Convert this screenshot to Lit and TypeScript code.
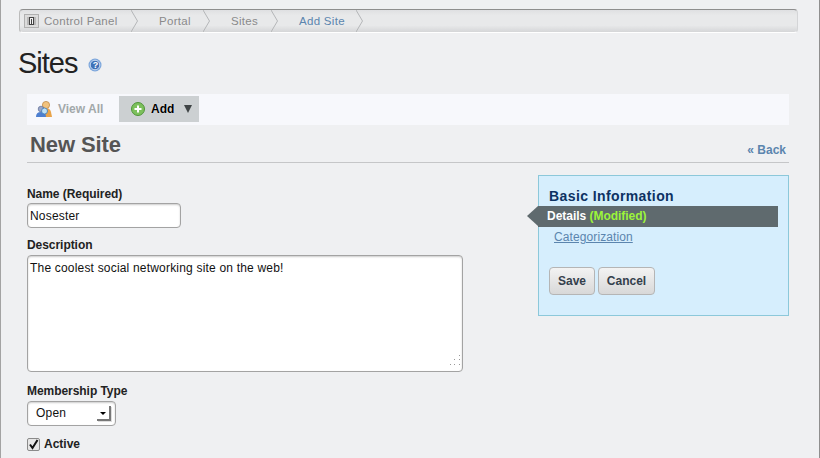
import { LitElement, html, css } from "lit";
import { customElement } from "lit/decorators.js";

@customElement("app-root")
export class AppRoot extends LitElement {
  static styles = css`
    :host { display: block; width: 820px; height: 458px; overflow: hidden; box-sizing: border-box; background: #eff0f2;
      border-left: 1px solid #a3a3a3; border-right: 1px solid #8f8f8f; font-family: "Liberation Sans", Arial, sans-serif; font-size: 12px; color: #222; padding: 9px 21px 0 17px; }
    .crumbs { height: 24px; box-sizing: border-box; display: flex; align-items: center; border: 1px solid #d4d5d7; border-top: 1px solid #8e8e8e; border-bottom: 1px solid #fff; border-left-color: #bbb; border-radius: 4px; background: linear-gradient(#dfe0e2, #e8e9ea 25%, #e8e9ea 70%, #d5d6d8); width: 779px; margin-left: 1px; }
    .crumb { position: relative; height: 22px; display: flex; align-items: center; color: #8a8a8a; letter-spacing: 0.3px; font-size: 11.5px; }
    .crumb svg.sep { position: absolute; right: 0; top: 0; }
    .c1 { width: 119px; padding-left: 4px; box-sizing: border-box; gap: 5px; }
    .c2 { width: 72px; padding-left: 20px; box-sizing: border-box; }
    .c3 { width: 68px; padding-left: 20px; box-sizing: border-box; }
    .c4 { width: 85px; padding-left: 20px; box-sizing: border-box; color: #5b85ae; }
    .title { display: flex; align-items: center; gap: 11px; height: 35px; margin-top: 13px; font-size: 29px; line-height: 35px; color: #222; letter-spacing: -1px; }
    .title svg { margin-top: 3px; }
    .toolbar { margin: 13px 0 0 9px; width: 762px; height: 31px; background: #f7f8fc; display: flex; align-items: flex-start; }
    .view { display: flex; align-items: center; height: 26px; margin-top: 2px; width: 92px; box-sizing: border-box; padding-left: 8px; gap: 5px; font-weight: bold; color: #a2a8aa; }
    .add { width: 80px; height: 26px; margin-top: 2px; background: #ccd0d2; display: flex; align-items: center; box-sizing: border-box; padding-left: 12px; font-weight: bold; color: #000; }
    .add span { margin-left: 6px; text-shadow: 0 0 1px #fff; }
    .add i { width: 0; height: 0; border-left: 4.5px solid transparent; border-right: 4.5px solid transparent; border-top: 8px solid #3f4446; margin-left: 10px; }
    .head { margin-left: 9px; width: 762px; height: 38px; box-sizing: border-box; border-bottom: 1px solid #c5c6c8; display: flex; justify-content: space-between; padding-left: 3px; }
    .head h2 { margin: 0; font-size: 22px; line-height: 40px; font-weight: bold; color: #555; letter-spacing: -0.1px; }
    .head a { font-weight: bold; color: #5b85ae; font-size: 12px; padding: 18px 3px 0 0; }
    .body { display: flex; margin-left: 9px; width: 762px; justify-content: space-between; }
    .form { padding-top: 24px; }
    label { display: block; font-weight: bold; color: #222; line-height: 14px; letter-spacing: -0.05px; }
    .box { background: #fff; border: 1px solid #a3a3a3; border-radius: 4px; box-shadow: inset 0 1px 2px #ccc; box-sizing: border-box; letter-spacing: 0.19px; color: #111; }
    .name { width: 154px; height: 25px; margin: 2px 0 10px; padding: 5px 2px; line-height: 14px; }
    .desc { position: relative; width: 436px; height: 117px; margin: 3px 0 12px; padding: 5px 2px; line-height: 14px; }
    .grip { position: absolute; right: 2px; bottom: 5px; }
    .sel { width: 89px; height: 25px; margin: 3px 0 11px; display: flex; align-items: center; padding: 0 0 2px 8px; position: relative; }
    .arrow { position: absolute; right: 4px; top: 4px; width: 14px; height: 15px; border-right: 2px solid #777; border-bottom: 2px solid #777; box-sizing: border-box; background: #fff; box-shadow: 1px 1px 0 #ddd; }
    .arrow::after { content: ""; position: absolute; left: 3px; top: 6px; border-left: 3px solid transparent; border-right: 3px solid transparent; border-top: 3px solid #000; }
    .active { display: flex; align-items: center; gap: 4px; font-weight: bold; }
    .check { width: 11px; height: 11px; border: 1px solid #8a8a8a; border-radius: 2px; background: #e6e6e6; display: block; box-sizing: content-box; }
    .panel { margin: 12px 0 0; width: 251px; height: 141px; box-sizing: border-box; background: #d6eefd; border: 1px solid #8cc8da; position: relative; padding: 12px 10px 0; }
    .panel h3 { margin: 0; font-size: 14px; line-height: 16px; font-weight: bold; color: #0d3263; letter-spacing: 0.4px; }
    .cur { position: relative; margin: 2px 0 0 -11px; width: 240px; height: 21px; background: #5f6a6e; color: #fff; font-weight: bold; line-height: 21px; padding-left: 9px; box-sizing: border-box; letter-spacing: -0.03px; }
    .cur::before { content: ""; position: absolute; left: -11px; top: 0; border-top: 10.5px solid transparent; border-bottom: 10.5px solid transparent; border-right: 11px solid #5f6a6e; }
    .cur b { color: #9cf53a; }
    .cat { display: inline-block; margin: 3px 0 0 5px; color: #5b85ae; text-decoration: underline; letter-spacing: 0.1px; line-height: 15px; }
    .btns { display: flex; gap: 3px; margin-top: 22px; }
    button { font: bold 12px "Liberation Sans", Arial, sans-serif; height: 28px; padding: 0; color: #34404c; border: 1px solid #b5b5b5; border-radius: 4px; background: linear-gradient(#f3f3f3, #d8d8d8); }
    .save { width: 46px; } .cancel { width: 57px; }
  `;
  render() {
    const sep = html`<svg class="sep" width="8" height="22"><path d="M0 0 L6.5 11 L0 22" fill="none" stroke="#b4b6b8"/></svg>`;
    return html`
      <nav class="crumbs">
        <div class="crumb c1"><svg width="15" height="14" viewBox="0 0 15 14"><rect x=".5" y=".5" width="14" height="13" fill="#dcdcdc" stroke="#b0b0b0"/><rect x="3" y="3" width="9" height="8" fill="#b9b9b9"/><rect x="5.5" y="3.5" width="4" height="7" fill="#f2f2f2" stroke="#444"/><rect x="7" y="5" width="1" height="5" fill="#444"/></svg>Control Panel${sep}</div>
        <div class="crumb c2">Portal${sep}</div>
        <div class="crumb c3">Sites${sep}</div>
        <div class="crumb c4">Add Site${sep}</div>
      </nav>
      <div class="title">Sites <svg width="14" height="14" viewBox="0 0 14 14"><circle cx="7" cy="7" r="6.5" fill="#7ca6dc"/><circle cx="7" cy="7" r="4.8" fill="#3f72b8" stroke="#c9dbf2"/><text x="7" y="10.2" text-anchor="middle" font-family="Liberation Sans" font-weight="bold" font-size="9" fill="#fff">?</text></svg></div>
      <div class="toolbar">
        <div class="view"><svg width="18" height="18" viewBox="0 0 18 18"><circle cx="11" cy="5" r="3.6" fill="#f1c27d" stroke="#b9803a" stroke-width=".7"/><path d="M6 17 V11 Q7 8 11 8 Q15 8 16 12 L17 17Z" fill="#e8a34a"/><circle cx="6" cy="9" r="2.8" fill="#9aa7c9" stroke="#50608a" stroke-width=".6"/><path d="M1 17 Q1 12 6 12 Q11 12 11 17Z" fill="#4d7fd0"/><circle cx="9.5" cy="11" r="3" fill="#bfe0f5" stroke="#3a78b8" stroke-width=".8"/></svg>View All</div>
        <div class="add"><svg width="14" height="14" viewBox="0 0 14 14"><circle cx="7" cy="7" r="6.5" fill="#7cc05c" stroke="#4f9438"/><path d="M7 3.5 V10.5 M3.5 7 H10.5" stroke="#fff" stroke-width="2"/></svg><span>Add</span><i></i></div>
      </div>
      <div class="head"><h2>New Site</h2><a>« Back</a></div>
      <div class="body">
        <div class="form">
          <label>Name (Required)</label>
          <div class="box name">Nosester</div>
          <label>Description</label>
          <div class="box desc">The coolest social networking site on the web!
            <svg class="grip" width="11" height="11" fill="#999"><rect x="10" y="0" width="1" height="1"/><rect x="5" y="4" width="1" height="1"/><rect x="10" y="4" width="1" height="1"/><rect x="1" y="9" width="1" height="1"/><rect x="5" y="9" width="1" height="1"/><rect x="10" y="9" width="1" height="1"/></svg></div>
          <label>Membership Type</label>
          <div class="box sel">Open<span class="arrow"></span></div>
          <div class="active"><svg class="check" viewBox="0 0 11 11"><path d="M2 5.5 L4.5 9 L9.5 1" fill="none" stroke="#111" stroke-width="2"/></svg>Active</div>
        </div>
        <aside class="panel">
          <h3>Basic Information</h3>
          <div class="cur">Details <b>(Modified)</b></div>
          <a class="cat">Categorization</a>
          <div class="btns"><button class="save">Save</button><button class="cancel">Cancel</button></div>
        </aside>
      </div>`;
  }
}
